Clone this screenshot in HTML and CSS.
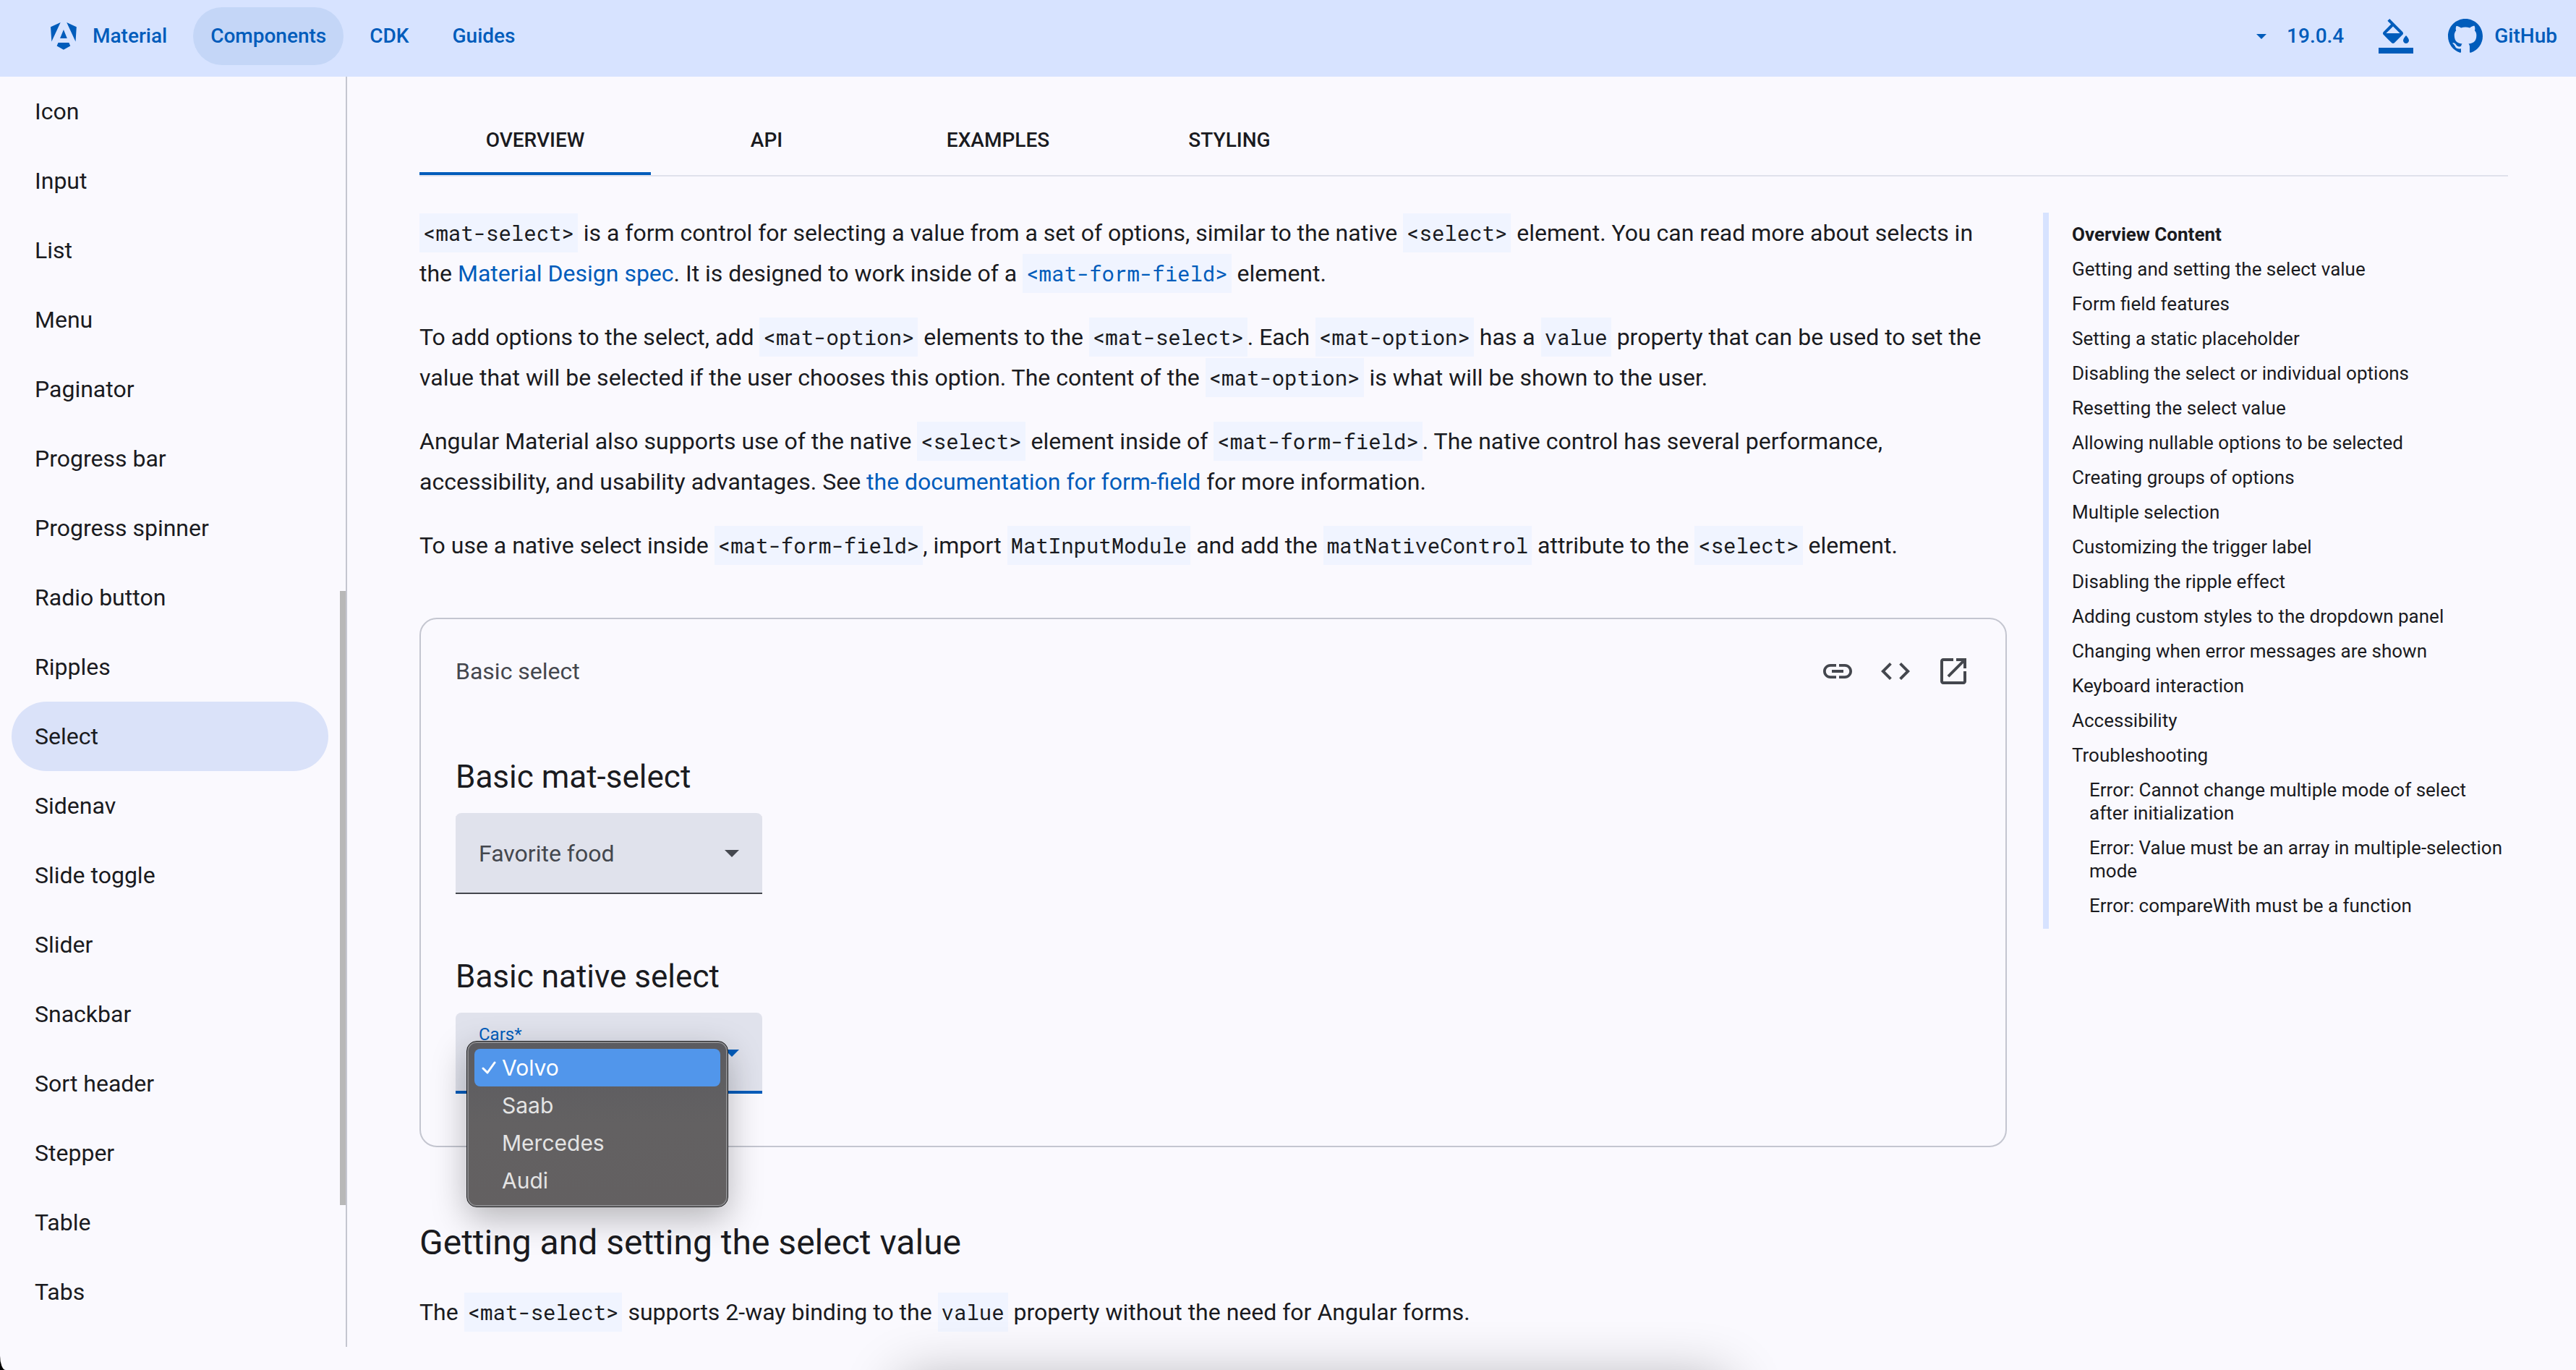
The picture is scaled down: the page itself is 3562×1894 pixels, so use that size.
FILE: index.html
```html
<!DOCTYPE html>
<html lang="en">
<head>
<meta charset="utf-8">
<meta name="viewport" content="width=device-width, initial-scale=1">
<title>Select | Angular Material</title>
<link rel="stylesheet" href="styles.css">
</head>
<body>
<div class="app">
  <header class="navbar">
    <nav class="navbar-links" aria-label="Top toolbar">
      <a class="nav-link nav-brand" href="#">
        <svg class="brand-logo" viewBox="0 0 223 236" aria-hidden="true"><path d="m222.077 39.192-8.019 125.923L137.387 0l84.69 39.192zm-53.105 162.825-57.933 33.056-57.934-33.056 11.783-28.556h92.301l11.783 28.556zM111.039 62.675l30.357 73.803H80.681l30.358-73.803zM7.937 165.115 0 39.192 84.69 0 7.937 165.115z"/></svg>
        Material
      </a>
      <a class="nav-link nav-link-active" href="#">Components</a>
      <a class="nav-link" href="#">CDK</a>
      <a class="nav-link" href="#">Guides</a>
    </nav>
    <div class="navbar-tools">
      <button class="tool version" type="button">
        <svg class="version-arrow" viewBox="0 0 14 7" aria-hidden="true"><path d="M0 0h14L7 7z"/></svg>
        19.0.4
      </button>
      <button class="tool" type="button" aria-label="Select a theme">
        <svg class="icon" viewBox="0 0 24 24" aria-hidden="true"><path d="M16.56 8.94L7.62 0 6.21 1.41l2.38 2.38-5.15 5.15c-.59.59-.59 1.54 0 2.12l5.5 5.5c.29.29.68.44 1.06.44s.77-.15 1.06-.44l5.5-5.5c.59-.58.59-1.53 0-2.12zM5.21 10L10 5.21 14.79 10H5.21zM19 11.5s-2 2.17-2 3.5c0 1.1.9 2 2 2s2-.9 2-2c0-1.33-2-3.5-2-3.5z"/><path d="M0 20h24v4H0z"/></svg>
      </button>
      <a class="tool github" href="#">
        <svg class="icon" viewBox="0 0 16 16" aria-hidden="true"><path d="M8 0C3.58 0 0 3.58 0 8c0 3.54 2.29 6.53 5.47 7.59.4.07.55-.17.55-.38 0-.19-.01-.82-.01-1.49-2.01.37-2.53-.49-2.69-.94-.09-.23-.48-.94-.82-1.13-.28-.15-.68-.52-.01-.53.63-.01 1.08.58 1.23.82.72 1.21 1.87.87 2.33.66.07-.52.28-.87.51-1.07-1.78-.2-3.64-.89-3.64-3.95 0-.87.31-1.59.82-2.15-.08-.2-.36-1.02.08-2.12 0 0 .67-.21 2.2.82.64-.18 1.32-.27 2-.27s1.36.09 2 .27c1.53-1.04 2.2-.82 2.2-.82.44 1.1.16 1.92.08 2.12.51.56.82 1.27.82 2.15 0 3.07-1.87 3.75-3.65 3.95.29.25.54.73.54 1.48 0 1.07-.01 1.93-.01 2.2 0 .21.15.46.55.38A8.01 8.01 0 0 0 16 8c0-4.42-3.58-8-8-8z"/></svg>
        GitHub
      </a>
    </div>
  </header>

  <div class="layout">
    <div class="sidenav">
      <nav class="sidenav-list" aria-label="Components">
        <a class="side-item" href="#">Icon</a>
        <a class="side-item" href="#">Input</a>
        <a class="side-item" href="#">List</a>
        <a class="side-item" href="#">Menu</a>
        <a class="side-item" href="#">Paginator</a>
        <a class="side-item" href="#">Progress bar</a>
        <a class="side-item" href="#">Progress spinner</a>
        <a class="side-item" href="#">Radio button</a>
        <a class="side-item" href="#">Ripples</a>
        <a class="side-item side-item-active" href="#" aria-current="page">Select</a>
        <a class="side-item" href="#">Sidenav</a>
        <a class="side-item" href="#">Slide toggle</a>
        <a class="side-item" href="#">Slider</a>
        <a class="side-item" href="#">Snackbar</a>
        <a class="side-item" href="#">Sort header</a>
        <a class="side-item" href="#">Stepper</a>
        <a class="side-item" href="#">Table</a>
        <a class="side-item" href="#">Tabs</a>
      </nav>
      <div class="scrollbar"></div>
    </div>

    <main class="main">
      <nav class="tabs" aria-label="Component pages">
        <a class="tab tab-active" href="#">OVERVIEW</a>
        <a class="tab" href="#">API</a>
        <a class="tab" href="#">EXAMPLES</a>
        <a class="tab" href="#">STYLING</a>
      </nav>

      <div class="content">
        <article class="doc">
          <p><code>&lt;mat-select&gt;</code> is a form control for selecting a value from a set of options, similar to the native <code>&lt;select&gt;</code> element. You can read more about selects in the <a href="#">Material Design spec</a>. It is designed to work inside of a <a href="#"><code>&lt;mat-form-field&gt;</code></a> element.</p>
          <p>To add options to the select, add <code>&lt;mat-option&gt;</code> elements to the <code>&lt;mat-select&gt;</code>. Each <code>&lt;mat-option&gt;</code> has a <code>value</code> property that can be used to set the value that will be selected if the user chooses this option. The content of the <code>&lt;mat-option&gt;</code> is what will be shown to the user.</p>
          <p>Angular Material also supports use of the native <code>&lt;select&gt;</code> element inside of <code>&lt;mat-form-field&gt;</code>. The native control has several performance, accessibility, and usability advantages. See <a href="#">the documentation for form-field</a> for more information.</p>
          <p>To use a native select inside <code>&lt;mat-form-field&gt;</code>, import <code>MatInputModule</code> and add the <code>matNativeControl</code> attribute to the <code>&lt;select&gt;</code> element.</p>

          <section class="example">
            <div class="example-header">
              <span class="example-title">Basic select</span>
              <div class="example-actions">
                <button class="icon-button" type="button" aria-label="Copy link to example">
                  <svg class="icon" viewBox="0 0 24 24" aria-hidden="true"><path d="M3.9 12c0-1.71 1.39-3.1 3.1-3.1h4V7H7c-2.76 0-5 2.24-5 5s2.24 5 5 5h4v-1.9H7c-1.71 0-3.1-1.39-3.1-3.1zM8 13h8v-2H8v2zm9-6h-4v1.9h4c1.71 0 3.1 1.39 3.1 3.1s-1.39 3.1-3.1 3.1h-4V17h4c2.76 0 5-2.24 5-5s-2.24-5-5-5z"/></svg>
                </button>
                <button class="icon-button" type="button" aria-label="View code">
                  <svg class="icon" viewBox="0 0 24 24" aria-hidden="true"><path d="M9.4 16.6L4.8 12l4.6-4.6L8 6l-6 6 6 6 1.4-1.4zm5.2 0l4.6-4.6-4.6-4.6L16 6l6 6-6 6-1.4-1.4z"/></svg>
                </button>
                <button class="icon-button" type="button" aria-label="Open in new window">
                  <svg class="icon" viewBox="0 0 24 24" aria-hidden="true"><path d="M19 19H5V5h7V3H5c-1.11 0-2 .9-2 2v14c0 1.1.89 2 2 2h14c1.1 0 2-.9 2-2v-7h-2v7z"/><path d="M14 3v2h3.59l-9.83 9.83 1.41 1.41L19 6.41V10h2V3h-7z"/></svg>
                </button>
              </div>
            </div>

            <div class="example-body">
              <h4>Basic mat-select</h4>
              <div class="field">
                <select class="field-control" aria-label="Favorite food">
                  <option>Favorite food</option>
                </select>
                <svg class="field-arrow" viewBox="0 0 20 10" aria-hidden="true"><path d="M0 0h20L10 10z"/></svg>
              </div>

              <h4>Basic native select</h4>
              <div class="field field-focused">
                <label class="field-label" for="cars">Cars*</label>
                <select class="field-control" id="cars" required>
                  <option>Volvo</option>
                  <option>Saab</option>
                  <option>Mercedes</option>
                  <option>Audi</option>
                </select>
                <svg class="field-arrow" viewBox="0 0 20 10" aria-hidden="true"><path d="M0 0h20L10 10z"/></svg>
                <div class="popup" role="listbox" aria-label="Cars">
                  <button class="option option-selected" type="button" role="option" aria-selected="true">
                    <svg class="check" viewBox="0 0 20 20" aria-hidden="true"><path d="M2 11l6 6L18 3"/></svg>
                    Volvo
                  </button>
                  <button class="option" type="button" role="option" aria-selected="false">Saab</button>
                  <button class="option" type="button" role="option" aria-selected="false">Mercedes</button>
                  <button class="option" type="button" role="option" aria-selected="false">Audi</button>
                </div>
              </div>
            </div>
          </section>

          <h3>Getting and setting the select value</h3>
          <p>The <code>&lt;mat-select&gt;</code> supports 2-way binding to the <code>value</code> property without the need for Angular forms.</p>
        </article>

        <nav class="toc" aria-labelledby="toc-title">
          <h2 class="toc-title" id="toc-title">Overview Content</h2>
          <a href="#">Getting and setting the select value</a>
          <a href="#">Form field features</a>
          <a href="#">Setting a static placeholder</a>
          <a href="#">Disabling the select or individual options</a>
          <a href="#">Resetting the select value</a>
          <a href="#">Allowing nullable options to be selected</a>
          <a href="#">Creating groups of options</a>
          <a href="#">Multiple selection</a>
          <a href="#">Customizing the trigger label</a>
          <a href="#">Disabling the ripple effect</a>
          <a href="#">Adding custom styles to the dropdown panel</a>
          <a href="#">Changing when error messages are shown</a>
          <a href="#">Keyboard interaction</a>
          <a href="#">Accessibility</a>
          <a href="#">Troubleshooting</a>
          <a class="toc-nested" href="#">Error: Cannot change multiple mode of select after initialization</a>
          <a class="toc-nested" href="#">Error: Value must be an array in multiple-selection mode</a>
          <a class="toc-nested" href="#">Error: compareWith must be a function</a>
        </nav>
      </div>
    </main>
  </div>
  <div class="dock-shadow"></div>
</div>
</body>
</html>
```
FILE: styles.css
```css
:root {
  --primary: #005cbb;
  --primary-container: #d7e3ff;
  --surface: #faf9fe;
  --on-surface: #1a1b1f;
  --on-surface-variant: #44474e;
  --surface-variant: #e0e2ec;
  --outline-variant: #c4c6d0;
}

* {
  box-sizing: border-box;
}

html {
  background: #000;
}

body {
  margin: 0;
  font-family: Roboto, "Liberation Sans", sans-serif;
  font-size: 32px;
  line-height: 56px;
  color: var(--on-surface);
}

a {
  color: var(--primary);
  text-decoration: none;
}

button,
select {
  margin: 0;
  border: 0;
  background: none;
  font: inherit;
  color: inherit;
}

svg {
  display: block;
  fill: currentColor;
}

.app {
  position: relative;
  min-height: 100vh;
  overflow: hidden;
  border-bottom-left-radius: 8px 20px;
  background: var(--surface);
}

.icon {
  width: 48px;
  height: 48px;
}

/* Top toolbar */

.navbar {
  display: flex;
  align-items: center;
  justify-content: space-between;
  min-height: 106px;
  padding: 0 26px 6px 46px;
  background: var(--primary-container);
  color: var(--primary);
  font-size: 28px;
  font-weight: 500;
  line-height: 40px;
}

.navbar-links {
  display: flex;
  gap: 12px;
}

.nav-link {
  display: flex;
  align-items: center;
  padding: 20px 24px;
  border-radius: 40px;
}

.nav-link-active {
  background: #c4d6f7;
}

.nav-brand {
  gap: 22px;
}

.brand-logo {
  width: 36px;
  height: 38px;
}

.navbar-tools {
  display: flex;
  align-items: center;
  gap: 48px;
}

.tool {
  display: flex;
  align-items: center;
  padding: 0;
}

.version {
  gap: 28px;
}

.version-arrow {
  width: 14px;
  height: 7px;
}

.github {
  gap: 16px;
}

/* Side navigation */

.layout {
  display: grid;
  grid-template-columns: 480px minmax(0, 1fr);
  align-items: start;
}

.sidenav {
  display: grid;
  grid-template-columns: minmax(0, 1fr) 8px;
  border-right: 2px solid var(--outline-variant);
}

.sidenav-list {
  display: flex;
  flex-direction: column;
  padding: 0 16px 28px;
}

.side-item {
  padding: 20px 32px;
  border-radius: 48px;
  color: inherit;
}

.side-item-active {
  background: #dae2f9;
}

.scrollbar {
  height: 849px;
  margin-top: 711px;
  background: #b8b8b8;
}

/* Main column */

.main {
  padding: 40px 94px 0 100px;
}

.tabs {
  display: flex;
  border-bottom: 2px solid var(--surface-variant);
  font-size: 28px;
  font-weight: 500;
  line-height: 40px;
}

.tab {
  width: 320px;
  padding: 28px 0 24px;
  border-bottom: 4px solid transparent;
  color: inherit;
  text-align: center;
}

.tab-active {
  border-bottom-color: var(--primary);
}

.content {
  display: grid;
  grid-template-columns: minmax(0, 1fr) 643px;
  gap: 50px;
  align-items: start;
  padding-top: 50px;
}

p {
  margin: 0 0 32px;
}

code {
  padding: 8px 5px;
  background: #f0f4ff;
  font-family: "Roboto Mono", "Liberation Mono", monospace;
  font-size: 29px;
  line-height: 1;
}

h3 {
  margin: 0 0 36px;
  font-size: 48px;
  font-weight: 400;
  line-height: 64px;
}

h4 {
  margin: 0 0 22px;
  font-size: 44px;
  font-weight: 400;
  line-height: 56px;
}

/* Example card */

.example {
  margin: 72px 0 100px;
  border: 2px solid var(--outline-variant);
  border-radius: 24px;
}

.example-header {
  display: flex;
  align-items: center;
  justify-content: space-between;
  padding: 32px 32px 32px 48px;
  color: var(--on-surface-variant);
}

.example-actions {
  display: flex;
}

.icon-button {
  padding: 16px;
}

.example-body {
  padding: 46px 48px 72px;
}

.field {
  position: relative;
  display: grid;
  width: 424px;
  height: 112px;
  margin-bottom: 86px;
  border-radius: 8px 8px 0 0;
  background: var(--surface-variant);
  box-shadow: inset 0 -2px var(--on-surface-variant);
  color: var(--on-surface-variant);
}

.field:last-child {
  margin-bottom: 0;
}

.field > * {
  grid-area: 1 / 1;
}

.field-control {
  width: 100%;
  padding: 0 64px 0 32px;
  appearance: none;
  outline: 0;
}

.field-arrow {
  align-self: center;
  justify-self: end;
  width: 20px;
  height: 10px;
  margin-right: 32px;
  pointer-events: none;
}

.field-label {
  padding: 14px 32px;
  color: var(--primary);
  font-size: 24px;
  line-height: 32px;
}

.field-focused {
  box-shadow: inset 0 -4px var(--primary);
}

.field-focused .field-control {
  padding-top: 40px;
}

.field-focused .field-arrow {
  color: var(--primary);
}

/* Open list of the native select */

.popup {
  position: absolute;
  top: 39px;
  left: 15px;
  width: 362px;
  padding: 10px;
  border: 1px solid #1c1c1e;
  border-radius: 14px;
  background: linear-gradient(#5b5b60, #636162 50%, #636061);
  box-shadow: inset 0 0 0 2px #8a8a8d, 0 16px 48px rgba(0, 0, 0, 0.28);
  color: #e4e4e4;
  font-family: Inter, "Liberation Sans", sans-serif;
  font-size: 30px;
  line-height: 52px;
}

.option {
  display: flex;
  align-items: center;
  gap: 8px;
  width: 100%;
  padding: 0 0 0 38px;
  border-radius: 8px;
}

.option-selected {
  padding-left: 10px;
  background: #5196eb;
  color: #fff;
}

.check {
  width: 20px;
  height: 20px;
  fill: none;
  stroke: currentColor;
  stroke-width: 3;
  stroke-linecap: round;
  stroke-linejoin: round;
}

/* Table of contents */

.toc {
  display: flex;
  flex-direction: column;
  padding: 14px 0 8px 32px;
  border-left: 8px solid var(--primary-container);
  font-size: 26px;
  line-height: 32px;
}

.toc a {
  padding: 8px 0;
  color: inherit;
}

.toc .toc-nested {
  padding-left: 24px;
}

.toc-title {
  margin: 0 0 8px;
  font-size: 26px;
  font-weight: 700;
  line-height: 32px;
}

/* Shadow cast over the lower edge of the window */

.dock-shadow {
  position: absolute;
  top: 100%;
  left: 35%;
  right: 33%;
  height: 100px;
  margin-top: 16px;
  box-shadow: 0 0 80px rgba(0, 0, 0, 0.32);
  pointer-events: none;
}
```
